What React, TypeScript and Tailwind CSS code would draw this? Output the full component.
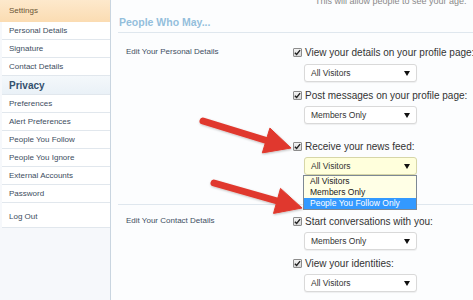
import React from "react"

const sideLinks = [
  { label: "Personal Details" },
  { label: "Signature" },
  { label: "Contact Details" },
]

const privacyLinks = [
  "Preferences",
  "Alert Preferences",
  "People You Follow",
  "People You Ignore",
  "External Accounts",
  "Password",
]

function Check() {
  return (
    <span className="w-[9px] h-[9px] shrink-0 border border-[#8c8c8c] rounded-[1px] bg-gradient-to-b from-[#f4f4f4] to-[#d8d8d8] flex items-center justify-center">
      <svg width="7" height="7" viewBox="0 0 8 8">
        <path d="M1 4.2 L3 6.3 L7 1.3" fill="none" stroke="#222" strokeWidth="1.6" />
      </svg>
    </span>
  )
}

function Option({ text, mt, focused, children }: { text: string; mt: string; focused?: boolean; children?: React.ReactNode }) {
  return (
    <div className={`relative ml-[12px] w-[113px] h-[18px] ${mt}`}>
      <div
        className={`h-full flex items-center justify-between pl-[6px] pr-[6px] rounded-[3px] border text-[8.5px] text-[#333] shadow-[0_1px_1px_rgba(0,0,0,0.06)] ${
          focused ? "bg-[#ffffdc] border-[#d6d6a8]" : "bg-white border-[#d9d9d9]"
        }`}
      >
        <span>{text}</span>
        <svg width="6" height="5" viewBox="0 0 6 5">
          <path d="M0 0 H6 L3 5 Z" fill="#111" />
        </svg>
      </div>
      {children}
    </div>
  )
}

function CheckLine({ text, mt }: { text: string; mt: string }) {
  return (
    <div className={`h-[14px] flex items-center gap-[3px] pl-[1px] text-[10px] text-[#333] whitespace-nowrap ${mt}`}>
      <Check />
      <span>{text}</span>
    </div>
  )
}

function Arrow({ tail, base, c1, c2, tip }: { tail: number[]; base: number[]; c1: number[]; c2: number[]; tip: number[] }) {
  return (
    <g>
      <line x1={tail[0]} y1={tail[1]} x2={base[0]} y2={base[1]} stroke="#e0392d" strokeWidth="7" strokeLinecap="round" />
      <polygon points={`${c1[0]},${c1[1]} ${tip[0]},${tip[1]} ${c2[0]},${c2[1]}`} fill="#e0392d" strokeLinejoin="round" stroke="#e0392d" strokeWidth="1" />
    </g>
  )
}

export default function App() {
  return (
    <div className="relative w-[473px] h-[300px] overflow-hidden flex bg-[#fbfcfe] font-['Liberation_Sans',Arial,sans-serif]">
      {/* sidebar */}
      <div className="w-[111px] shrink-0 h-full bg-[#f6f8fb] border-r border-[#c9d5e0]">
        <div className="h-[22px] flex items-center pl-[9px] text-[8px] text-[#6a5536] bg-gradient-to-b from-[#fde9cc] to-[#fbdcb2]">
          Settings
        </div>
        {sideLinks.map((l) => (
          <div key={l.label} className="h-[18px] ml-[2px] flex items-center pl-[7px] text-[8px] text-[#3d4d60] bg-white border-b border-[#e1e7ed]">
            {l.label}
          </div>
        ))}
        <div className="h-[19px] ml-[2px] flex items-center pl-[7px] text-[10px] font-bold text-[#34506e] bg-gradient-to-b from-[#f4f8fb] to-[#eaf1f7] border-b border-[#e1e7ed]">
          Privacy
        </div>
        {privacyLinks.map((l) => (
          <div key={l} className="h-[18px] ml-[2px] flex items-center pl-[7px] text-[8px] text-[#3d4d60] bg-white border-b border-[#e1e7ed]">
            {l}
          </div>
        ))}
        <div className="h-[25px] ml-[2px] flex items-end pb-[4px] pl-[7px] text-[8px] text-[#3d4d60] bg-white border-b border-[#e1e7ed]">
          Log Out
        </div>
      </div>

      {/* main */}
      <div className="flex-1 pl-[7px] bg-[#fcfdfe]">
        <div className="h-[33px] border-b border-[#dfe7ee] flex flex-col">
          <div className="-mt-[4px] pl-[197px] leading-[10px] text-[9px] text-[#8a8a8a] whitespace-nowrap">
            This will allow people to see your age.
          </div>
          <div className="mt-[10px] pl-[1px] text-[10.5px] font-bold text-[#94bfdc] leading-[12px]">People Who May...</div>
        </div>

        <div className="flex pt-[12px] pb-[29px] border-b border-[#dfe7ee]">
          <div className="w-[174px] shrink-0 pl-[8px] text-[8px] text-[#3f4f63] leading-[14px]">Edit Your Personal Details</div>
          <div className="flex flex-col">
            <CheckLine text="View your details on your profile page:" mt="" />
            <Option text="All Visitors" mt="mt-[5px]" />
            <CheckLine text="Post messages on your profile page:" mt="mt-[6px]" />
            <Option text="Members Only" mt="mt-[4px]" />
            <CheckLine text="Receive your news feed:" mt="mt-[15px]" />
            <Option text="All Visitors" mt="mt-[4px]" focused>
              <div className="absolute z-10 top-[18px] -left-[1px] w-[114px] border border-[#7d8894] bg-[#ffffe6] text-[8.5px] text-[#222]">
                <div className="h-[11px] leading-[11px] pl-[6px]">All Visitors</div>
                <div className="h-[11px] leading-[11px] pl-[6px]">Members Only</div>
                <div className="h-[11px] leading-[11px] pl-[6px] bg-[#3399ff] text-white">People You Follow Only</div>
              </div>
            </Option>
          </div>
        </div>

        <div className="flex pt-[9px]">
          <div className="w-[174px] shrink-0 pl-[8px] text-[8px] text-[#3f4f63] leading-[14px]">Edit Your Contact Details</div>
          <div className="flex flex-col">
            <CheckLine text="Start conversations with you:" mt="" />
            <Option text="Members Only" mt="mt-[4px]" />
            <CheckLine text="View your identities:" mt="mt-[6px]" />
            <Option text="All Visitors" mt="mt-[4px]" />
          </div>
        </div>
      </div>

      {/* annotation arrows */}
      <svg className="absolute left-0 top-0 pointer-events-none z-20" width="473" height="300">
        <defs>
          <filter id="sh" x="-10%" y="-10%" width="130%" height="140%">
            <feDropShadow dx="0.5" dy="1" stdDeviation="0.8" floodColor="#000" floodOpacity="0.25" />
          </filter>
        </defs>
        <g filter="url(#sh)">
          <Arrow tail={[203, 121]} base={[268, 141]} c1={[269.9, 128.1]} c2={[262.3, 152.9]} tip={[291, 148]} />
          <Arrow tail={[214, 183]} base={[279, 201.5]} c1={[280.5, 188.4]} c2={[273.5, 213.4]} tip={[302, 208]} />
        </g>
      </svg>
    </div>
  )
}
